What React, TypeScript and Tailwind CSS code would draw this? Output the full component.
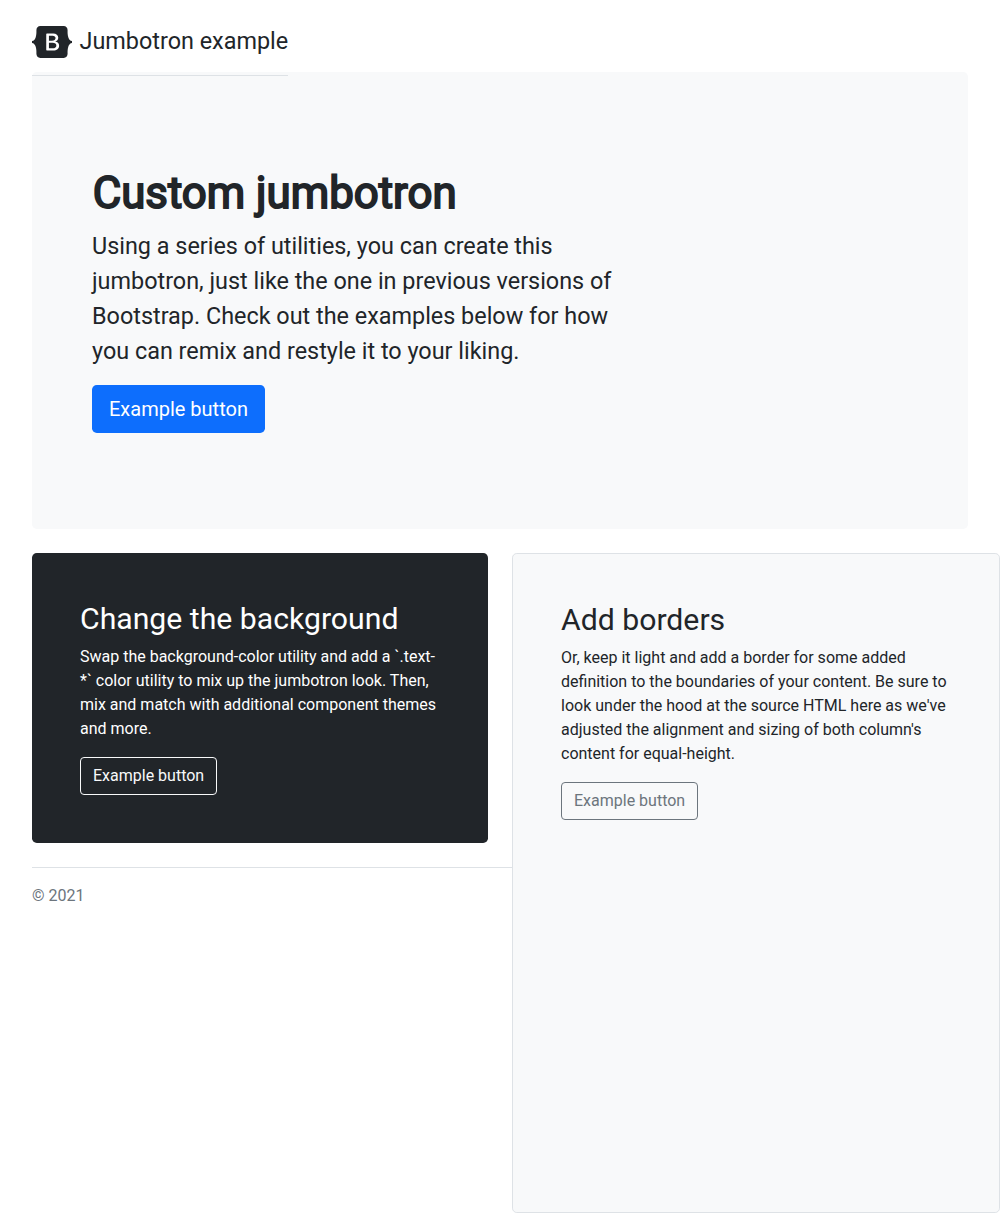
export default function App() {
  return (
    <main className="h-[1213px] w-[1000px] overflow-hidden bg-white font-[Roboto,sans-serif] text-base text-[#212529]">
      <div className="px-8 pt-6">
        <header className="h-12">
          <a href="#" className="inline-flex h-[52px] w-64 items-start border-b border-[#dee2e6] whitespace-nowrap text-[#212529]">
            <svg width="40" height="32" viewBox="0 0 118 94" className="mt-0.5 mr-[7.5px] shrink-0" fill="currentColor">
              <title>Bootstrap</title>
              <path fillRule="evenodd" clipRule="evenodd" d="M24.509 0c-6.733 0-11.715 5.893-11.492 12.284.214 6.14-.064 14.092-2.066 20.577C8.943 39.365 5.547 43.485 0 44.014v5.972c5.547.529 8.943 4.649 10.951 11.153 2.002 6.485 2.28 14.437 2.066 20.577C12.794 88.106 17.776 94 24.51 94H93.5c6.733 0 11.714-5.893 11.491-12.284-.214-6.14.064-14.092 2.066-20.577 2.009-6.504 5.396-10.624 10.943-11.153v-5.972c-5.547-.529-8.934-4.649-10.943-11.153-2.002-6.484-2.28-14.437-2.066-20.577C105.214 5.894 100.233 0 93.5 0H24.508zM80 57.863C80 66.663 73.436 72 62.543 72H44a2 2 0 01-2-2V24a2 2 0 012-2h18.437c9.083 0 15.044 4.92 15.044 12.474 0 5.302-4.01 10.049-9.119 10.88v.277C75.317 46.394 80 51.21 80 57.863zM60.521 28.34H49.948v14.934h8.905c6.884 0 10.68-2.772 10.68-7.727 0-4.643-3.264-7.207-9.012-7.207zM49.948 49.2v16.458H60.91c7.167 0 10.964-2.876 10.964-8.281 0-5.406-3.903-8.178-11.425-8.178H49.948z" />
            </svg>
            <span className="text-[23.4px] leading-[35.1px]">Jumbotron example</span>
          </a>
        </header>
        <section className="h-[457px] rounded-[4.8px] bg-[#f8f9fa] px-[60px] pt-24">
          <h1 className="mb-2 translate-x-[0.7px] translate-y-[-0.7px] text-[43.8px] leading-[52.56px] font-normal [-webkit-text-stroke:1.9px_#212529]">Custom jumbotron</h1>
          <p className="mb-4 text-[23.4px] leading-[35.1px]">
            Using a series of utilities, you can create this<br />
            jumbotron, just like the one in previous versions of<br />
            Bootstrap. Check out the examples below for how<br />
            you can remix and restyle it to your liking.
          </p>
          <button className="h-12 rounded-[4.8px] bg-[#0d6efd] px-[17px] text-xl text-white">Example button</button>
        </section>
      </div>
      <div className="mt-6 flex items-start pl-8">
        <div className="w-[480px] shrink-0">
          <section className="mr-6 h-[290px] rounded-[4.8px] bg-[#212529] p-12 text-white">
            <h2 className="mb-2 text-[30.2px] leading-[36.24px]">Change the background</h2>
            <p className="mb-4 leading-6">
              Swap the background-color utility and add a `.text-<br />
              *` color utility to mix up the jumbotron look. Then,<br />
              mix and match with additional component themes<br />
              and more.
            </p>
            <button className="h-[38px] rounded border border-[#f8f9fa] px-3 text-[#f8f9fa]">Example button</button>
          </section>
          <footer className="mt-6 border-t border-[#dee2e6] pt-4 leading-6 text-[#6c757d]">© 2021</footer>
        </div>
        <section className="h-[660px] w-[488px] shrink-0 rounded-[4.8px] border border-[#dee2e6] bg-[#f8f9fa] p-12">
          <h2 className="mb-2 text-[30.2px] leading-[36.24px]">Add borders</h2>
          <p className="mb-4 leading-6">
            Or, keep it light and add a border for some added<br />
            definition to the boundaries of your content. Be sure to<br />
            look under the hood at the source HTML here as we've<br />
            adjusted the alignment and sizing of both column's<br />
            content for equal-height.
          </p>
          <button className="h-[38px] rounded border border-[#6c757d] px-3 text-[#6c757d]">Example button</button>
        </section>
      </div>
    </main>
  );
}
